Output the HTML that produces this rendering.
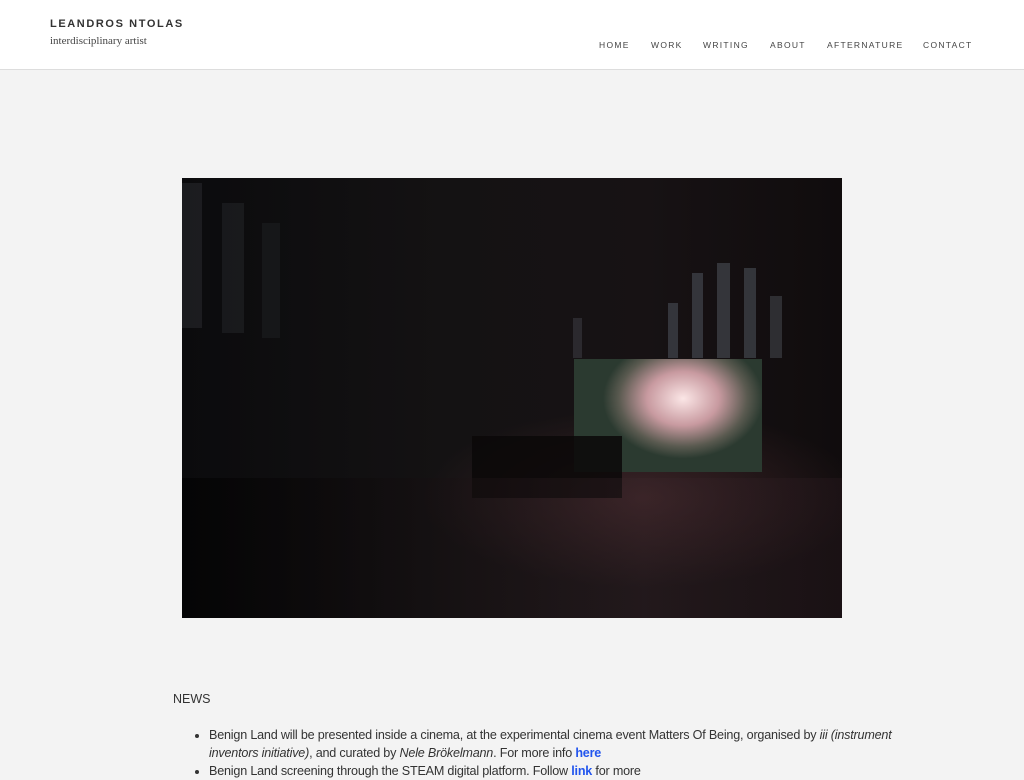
<!DOCTYPE html>
<html><head><style>
body{margin:0;background:#f3f3f3;font-family:"Liberation Sans",sans-serif;width:1024px;height:768px;overflow:hidden;position:relative}
.hdr{position:absolute;left:0;top:0;width:1024px;height:69px;background:#fff;border-bottom:1px solid #ddd}
.name{position:absolute;left:50px;top:18px;font-size:11px;font-weight:bold;letter-spacing:1.6px;color:#333}
.sub{position:absolute;left:50px;top:35px;font-family:"Liberation Serif",serif;font-size:11px;color:#444}
.nav{position:absolute;top:40px;font-size:8.5px;letter-spacing:1.3px;color:#444}
.img{position:absolute;left:182px;top:178px;width:660px;height:440px;overflow:hidden;background:
radial-gradient(ellipse 220px 90px at 460px 320px,rgba(110,60,65,.4),transparent),
linear-gradient(to right,#0b0b0d 0,#141213 40%,#171214 70%,#100c0d 100%);}
.scr{position:absolute;left:392px;top:181px;width:188px;height:113px;background:radial-gradient(ellipse 80px 60px at 58% 35%,#fbe6e6,#c89aa0 45%,#5a5a50 80%,#2b3a30);}
.win{position:absolute;background:#4a4e56}
.news{position:absolute;left:173px;top:692px;font-size:12.5px;color:#333}
ul{position:absolute;left:173px;top:726px;margin:0;padding-left:36px;width:712px;font-size:12.6px;letter-spacing:-0.2px;line-height:18px;color:#333}
a{color:#2255ee;font-weight:bold;text-decoration:none}
</style></head><body>
<div class="hdr">
<div class="name">LEANDROS NTOLAS</div>
<div class="sub">interdisciplinary artist</div>
<span class="nav" style="left:599px">HOME</span>
<span class="nav" style="left:651px">WORK</span>
<span class="nav" style="left:703px">WRITING</span>
<span class="nav" style="left:770px">ABOUT</span>
<span class="nav" style="left:827px">AFTERNATURE</span>
<span class="nav" style="left:923px">CONTACT</span>
</div>
<div class="img">
<div class="win" style="left:0;top:5px;width:20px;height:145px;opacity:.25"></div>
<div class="win" style="left:40px;top:25px;width:22px;height:130px;opacity:.2"></div>
<div class="win" style="left:80px;top:45px;width:18px;height:115px;opacity:.15"></div>
<div class="win" style="left:391px;top:140px;width:9px;height:40px;opacity:.4"></div>
<div class="win" style="left:486px;top:125px;width:10px;height:55px;opacity:.6"></div>
<div class="win" style="left:510px;top:95px;width:11px;height:85px;opacity:.6"></div>
<div class="win" style="left:535px;top:85px;width:13px;height:95px;opacity:.6"></div>
<div class="win" style="left:562px;top:90px;width:12px;height:90px;opacity:.6"></div>
<div class="win" style="left:588px;top:118px;width:12px;height:62px;opacity:.5"></div>
<div class="scr"></div>
<div style="position:absolute;left:290px;top:258px;width:150px;height:62px;background:#0a0808;opacity:.85"></div>
<div style="position:absolute;left:0;top:300px;width:660px;height:140px;background:linear-gradient(to right,rgba(0,0,0,.6),rgba(60,40,45,.3) 70%,rgba(40,25,30,.4))"></div>
</div>
<div class="news">NEWS</div>
<ul><li>Benign Land will be presented inside a cinema, at the experimental cinema event Matters Of Being, organised by <i>iii (instrument inventors initiative)</i>, and curated by <i>Nele Brökelmann</i>. For more info <a>here</a></li>
<li>Benign Land screening through the STEAM digital platform. Follow <a>link</a> for more</li></ul>
</body></html>
